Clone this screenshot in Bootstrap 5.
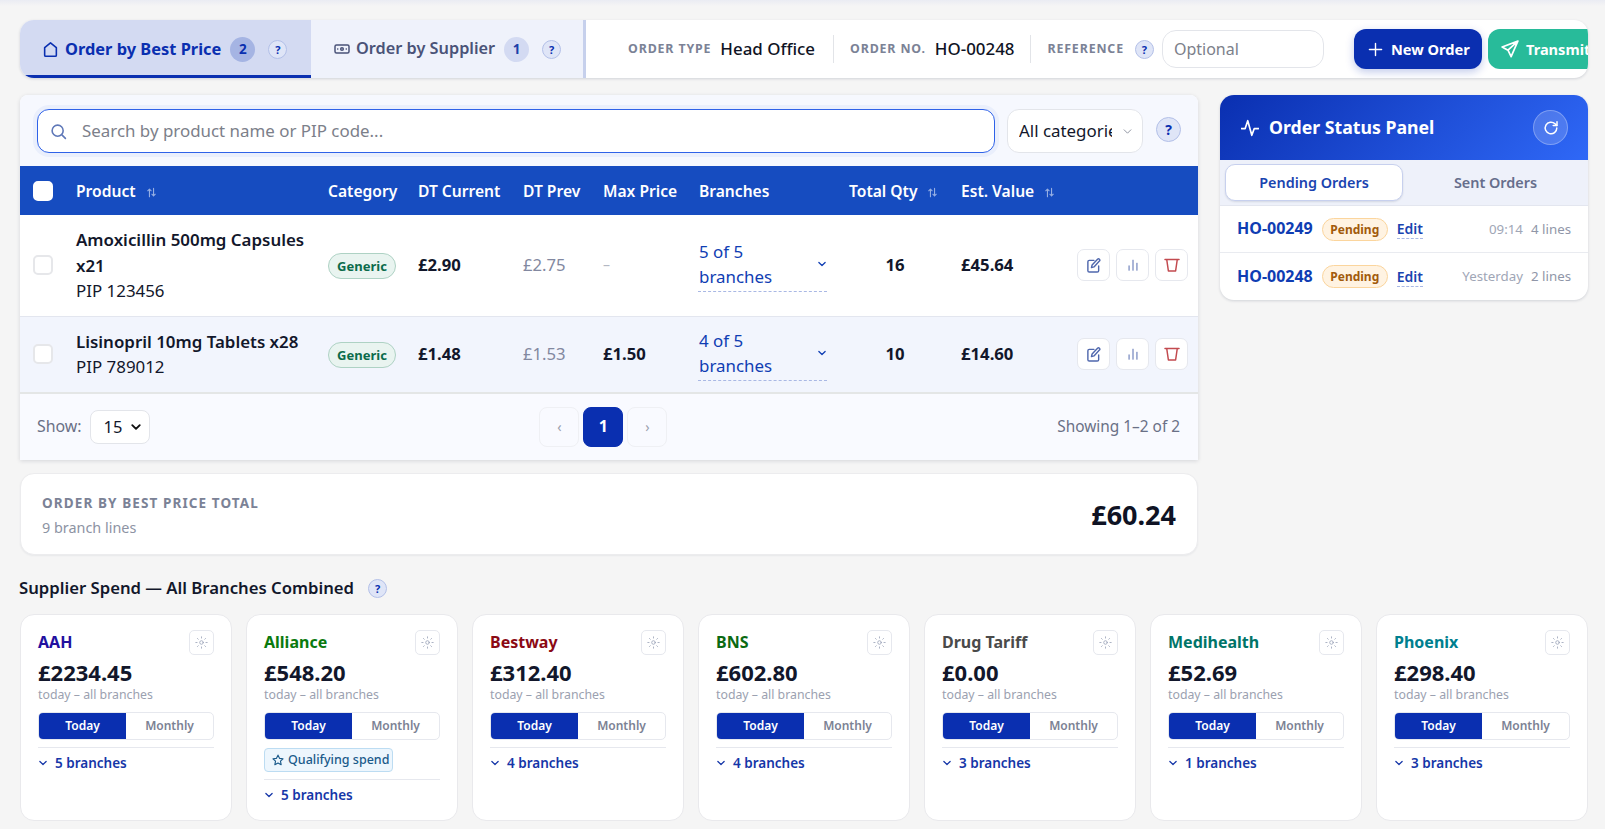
<!DOCTYPE html>
<html lang="en">
<head>
  <meta charset="UTF-8">
  <meta name="viewport" content="width=device-width, initial-scale=1.0">
  <title>Order by Best Price</title>
  <link href="https://cdn.jsdelivr.net/npm/bootstrap@5.3.3/dist/css/bootstrap.min.css" rel="stylesheet">
  <script src="https://cdn.jsdelivr.net/npm/bootstrap@5.3.3/dist/js/bootstrap.bundle.min.js"></script>
  <style>
    html, body { overflow: hidden; }
    body { background: #f5f5f5; font-family: "Noto Sans", sans-serif; color: #12172b; font-size: 15px; line-height: 1.7; height: 829px; }
    .ico { display: inline-block; fill: none; stroke: currentColor; stroke-width: 1.5; stroke-linecap: round; stroke-linejoin: round; flex-shrink: 0; }
    .top-edge { height: 6px; background: linear-gradient(#eaecf3, #f5f5f5); }
    .page-wrap { padding: 14px 17px 0 20px; }

    /* top bar */
    .top-bar { height: 58px; background: #fff; border-radius: 14px; box-shadow: 0 1px 3px rgba(20, 30, 60, .16); overflow: hidden; }
    .mode-tab { height: 58px; display: flex; align-items: center; font-size: 16.3px; font-weight: 600; color: #4a5378; background: #eff2fb; flex-shrink: 0; }
    .mode-tab.on { width: 291px; background: #d3daf2; color: #0a2fb0; font-size: 16.4px; font-weight: 700; border-bottom: 3px solid #0a2fb0; padding: 3px 0 0 22px; }
    .mode-tab.off { width: 275px; border-right: 3px solid #c6d0ec; padding-left: 23px; }
    .tab-icon { margin-right: 6px; }
    .tab-count { width: 25px; height: 25px; border-radius: 50%; display: flex; align-items: center; justify-content: center; font-size: 13.5px; font-weight: 700; margin: 0 13px 0 9px; }
    .on .tab-count { background: #a5b4e3; color: #0a2fb0; }
    .off .tab-count { background: #d3daf2; color: #1c3fa8; }
    .q-dot { width: 19px; height: 19px; border-radius: 50%; background: #dfe5f7; border: 1px solid #b3c0e8; color: #0a2fb0; font-size: 11px; font-weight: 700; display: inline-flex; align-items: center; justify-content: center; flex-shrink: 0; line-height: 1; }
    .meta-group { padding-left: 42px; }
    .meta-label { font-size: 12.4px; font-weight: 700; letter-spacing: .85px; color: #7b8296; white-space: nowrap; }
    .meta-val { font-size: 16.9px; font-weight: 500; color: #0f1324; margin-left: 9px; white-space: nowrap; }
    .meta-sep { width: 1px; height: 28px; background: #e2e4e8; margin: 0 16px; }
    .meta-sep.wide { margin-left: 18px; }
    .ref-label { margin-right: 11px; }
    .ref-input { width: 162px; height: 38px; border: 1px solid #e3e5ea; border-radius: 14px; margin-left: 8px; font-size: 16px; padding: 0 11px; color: #333; }
    .ref-input::placeholder, .find-box input::placeholder { color: #7c808a; opacity: 1; }
    .act-btn { height: 40px; border: 0; border-radius: 12px; color: #fff; font-size: 14.6px; font-weight: 700; display: flex; align-items: center; flex-shrink: 0; white-space: nowrap; }
    .act-new { width: 128px; margin-left: 30px; background: #0a2fb0; padding: 0 0 0 14px; gap: 8px; box-shadow: 0 3px 8px rgba(10, 47, 176, .25); }
    .act-send { width: 140px; margin-left: 6px; background: #28bb9a; padding: 0 0 0 13px; gap: 7px; }

    /* main table card */
    .main-row { margin-top: 17px; gap: 22px; }
    .left-col { width: 1178px; flex-shrink: 0; }
    .right-col { width: 368px; flex-shrink: 0; }
    .grid-card { background: #fff; box-shadow: 0 1px 4px rgba(20, 30, 60, .14); border-radius: 8px 8px 0 0; overflow: hidden; }
    .grid-tools { height: 71px; background: #f6f8fe; padding: 14px 17px 0; }
    .find-box { width: 958px; height: 44px; background: #fff; border: 1px solid #2f62e8; border-radius: 12px; box-shadow: 0 0 0 4px #eaeffc; padding-left: 12px; color: #5f78b8; }
    .find-box input { border: 0; outline: 0; flex-grow: 1; font-size: 16.9px; margin-left: 13px; background: transparent; }
    .cat-select { width: 136px; height: 44px; margin-left: 12px; border: 1px solid #e3e5ea; border-radius: 12px; font-size: 16.9px; padding: 0 30px 0 11px; color: #12172b; box-shadow: none; background-size: 11px 9px; background-position: right 9px center; background-image: url("data:image/svg+xml,%3csvg xmlns='http://www.w3.org/2000/svg' viewBox='0 0 16 16'%3e%3cpath fill='none' stroke='%23868b98' stroke-linecap='round' stroke-linejoin='round' stroke-width='1.6' d='m2 5 6 6 6-6'/%3e%3c/svg%3e"); }
    .q-big { width: 25px; height: 25px; font-size: 14px; margin-left: 13px; }
    .order-table { width: 1178px; table-layout: fixed; margin: 0; border-collapse: collapse; }
    .order-table th { height: 49px; background: #164cc0; color: #fff; font-size: 15.6px; font-weight: 600; padding: 1px 0 0 12px; vertical-align: middle; border: 0; white-space: nowrap; }
    .order-table td { padding: 0 0 0 12px; vertical-align: middle; border: 0; font-size: 16.9px; background: transparent; color: #12172b; box-shadow: none; }
    .order-table .first { padding-left: 13px; }
    .w-chk { width: 44px; } .w-prod { width: 252px; } .w-cat { width: 90px; } .w-cur { width: 105px; } .w-prev { width: 80px; }
    .w-max { width: 96px; } .w-branch { width: 150px; } .w-qty { width: 112px; } .w-val { width: 112px; } .w-act { width: 137px; }
    .row-a { height: 101px; border-bottom: 1px solid #e3e6ef; }
    .row-b { height: 77px; background: #f2f5fd; border-bottom: 2px solid #e4e6e6; }
    .tick { width: 20px; height: 20px; border: 2px solid #e6e7ea; border-radius: 5px; background: #fff; display: block; }
    th .tick { border-color: #fff; }
    .prod-name { font-weight: 600; line-height: 25.5px; }
    .prod-pip { line-height: 25.5px; }
    .kind-pill { display: inline-block; width: 68px; height: 26px; line-height: 24px; text-align: center; border-radius: 13px; background: #e9f4f0; border: 1px solid #aed2c4; color: #0b6b4b; font-size: 13px; font-weight: 700; }
    .order-table td.strong-price { font-weight: 700; font-size: 16.7px; }
    .order-table td.soft-price { color: #8288a0; font-size: 16.7px; }
    .order-table td.no-price { color: #b4b8c4; font-size: 14px; }
    .branch-pick { width: 129px; margin-left: -1px; border-bottom: 1px dashed #a9b8e4; color: #0f3db3; line-height: 25px; padding: 0 0 2px 1px; }
    .branch-pick span { width: 80px; }
    .branch-pick .ico { stroke-width: 2; }
    .act-row { padding-left: 4px; gap: 6px; }
    .act-cell { width: 33px; height: 32px; border: 1px solid #e6e8ee; border-radius: 7px; background: #fff; display: flex; align-items: center; justify-content: center; color: #4f67ad; }
    .act-cell.danger { color: #c24a4f; }
    .act-cell .thin { stroke-width: 1.1; }
    .sort-ico { color: rgba(255, 255, 255, .55); margin-left: 10px; vertical-align: -1px; stroke-width: 1.6; }
    .grid-foot { height: 66px; background: #f9faff; padding: 0 18px 0 17px; color: #6a7086; font-size: 15.9px; }
    .foot-count { font-size: 15.4px; }
    .show-select { width: 60px; height: 34px; margin-left: 8px; border: 1px solid #e3e5ea; border-radius: 8px; font-size: 16.5px; padding: 0 0 0 13px; color: #12172b; box-shadow: none; background-size: 12px 10px; background-position: right 7px center; background-image: url("data:image/svg+xml,%3csvg xmlns='http://www.w3.org/2000/svg' viewBox='0 0 16 16'%3e%3cpath fill='none' stroke='%23111' stroke-linecap='round' stroke-linejoin='round' stroke-width='3' d='m2 5 6 6 6-6'/%3e%3c/svg%3e"); }
    .pager-cell { width: 40px; height: 40px; border: 1px solid #eff0f4; border-radius: 8px; display: flex; align-items: center; justify-content: center; color: #9aa0ae; font-size: 14px; }
    .pager-cell.cur { background: #0a2fb0; border-color: #0a2fb0; color: #fff; font-weight: 700; font-size: 16px; }

    /* total */
    .total-card { height: 82px; margin-top: 13px; background: #fff; border: 1px solid #ececee; border-radius: 14px; padding: 2px 21px 0; box-shadow: 0 1px 2px rgba(20, 30, 60, .06); }
    .total-label { font-size: 13.5px; font-weight: 700; letter-spacing: 1.1px; color: #7b8296; line-height: 24px; }
    .total-lines { font-size: 14.4px; color: #8d93a3; line-height: 24px; margin-top: 1px; }
    .total-amount { font-size: 27px; font-weight: 700; color: #0f1324; }

    /* status panel */
    .status-card { background: #fff; border-radius: 14px; overflow: hidden; box-shadow: 0 1px 3px rgba(20, 30, 60, .16); }
    .status-head { height: 65px; background: linear-gradient(135deg, #0a2fb0, #2f68f7); color: #fff; padding: 0 20px 0 21px; }
    .status-title { font-size: 17.7px; font-weight: 700; margin-left: 10px; }
    .refresh-btn { width: 35px; height: 35px; border-radius: 50%; background: rgba(255, 255, 255, .17); border: 1px solid rgba(255, 255, 255, .28); display: flex; align-items: center; justify-content: center; }
    .status-tabs { height: 46px; background: #eef1fa; padding: 4px 0 0 5px; border-bottom: 1px solid #e3e6ef; font-size: 14.4px; font-weight: 600; color: #666e8c; }
    .status-tab { height: 37px; display: flex; align-items: center; justify-content: center; flex: 0 0 178px; padding-top: 2px; }
    .status-tab.on { background: #fff; border: 1px solid #c7d0ee; border-radius: 10px; color: #1a44b0; box-shadow: 0 1px 2px rgba(20, 30, 60, .12); }
    .status-tab.rest { flex: 1 0 0; }
    .status-row { height: 47px; padding: 0 17px 0 18px; border-bottom: 1px solid #e9ebf0; }
    .status-row:last-child { border-bottom: 0; }
    .order-no { font-size: 16px; font-weight: 700; color: #0f3db3; margin-left: -1px; }
    .pend-pill { width: 66px; height: 23px; line-height: 21px; text-align: center; margin-left: 9px; border-radius: 12px; background: #fff3e2; border: 1px solid #fbd59d; color: #a25b0c; font-size: 12px; font-weight: 700; }
    .edit-link { margin-left: 9px; font-size: 14px; font-weight: 600; line-height: 19px; color: #1a44b0; border-bottom: 1px dashed #a9b8e4; }
    .row-when { margin-left: auto; color: #a0a6b6; font-size: 13.3px; }
    .row-lines { margin-left: 8px; color: #9096a8; font-size: 13.3px; }

    /* supplier spend */
    .spend-head { margin: 21px 0 0 -1px; height: 24px; font-size: 16.7px; font-weight: 600; color: #12172b; }
    .spend-head .q-dot { margin-left: 14px; }
    .spend-grid { margin-top: 14px; gap: 14px; }
    .spend-card { width: 212px; height: 207px; flex-shrink: 0; background: #fff; border: 1px solid #e9e9ec; border-radius: 14px; padding: 15px 17px 0; }
    .sup-name { font-size: 16px; font-weight: 700; line-height: 25px; }
    .gear-btn { width: 25px; height: 25px; border: 1px solid #e6e8ee; border-radius: 5px; display: flex; align-items: center; justify-content: center; color: #9aa2b8; }
    .gear-btn .ico { stroke-width: 1; }
    .spend-amt { font-size: 22px; font-weight: 700; line-height: 29px; margin-top: 3px; color: #12172b; }
    .spend-sub { font-size: 12.3px; line-height: 16px; color: #9ba1b0; }
    .spend-toggle { height: 28px; margin-top: 9px; border: 1px solid #e6e8ee; border-radius: 5px; overflow: hidden; font-size: 12px; font-weight: 600; }
    .spend-toggle div { flex: 1 0 0; text-align: center; line-height: 26px; color: #7c8294; }
    .spend-toggle .on { background: #0a2fb0; color: #fff; }
    .spend-branches { margin-top: 7px; border-top: 1px solid #e6e8ee; padding-top: 2px; font-size: 13.5px; font-weight: 600; color: #1536a8; line-height: 26px; gap: 7px; display: flex; align-items: center; }
    .spend-branches .ico { stroke-width: 2; }
    .qual-tag { width: 129px; height: 24px; margin-top: 8px; background: #edf6fd; border: 1px solid #bcdcf2; border-radius: 4px; color: #1a5a8a; font-size: 12.5px; font-weight: 500; gap: 4px; padding-left: 7px; }
    .c-aah { color: #22109f; } .c-all { color: #0a7a0e; } .c-bes { color: #8b0a14; } .c-bns { color: #0b6a12; }
    .c-dt { color: #4a4a4a; } .c-med { color: #007468; } .c-pho { color: #007f8f; }
  </style>
</head>
<body>
  <svg width="0" height="0" class="position-absolute">
    <symbol id="i-house" viewBox="0 0 16 16"><path d="M2.5 6.3 8 1.8l5.5 4.5v7a1 1 0 0 1-1 1h-9a1 1 0 0 1-1-1z"/></symbol>
    <symbol id="i-cash" viewBox="0 0 16 16"><rect x="1" y="4" width="14" height="8" rx="1.5"/><circle cx="8" cy="8" r="1.3"/><path d="M3.6 8h.2M12.2 8h.2"/></symbol>
    <symbol id="i-search" viewBox="0 0 16 16"><circle cx="7.2" cy="7.2" r="5.2"/><path d="m11.2 11.2 3.3 3.3"/></symbol>
    <symbol id="i-plus" viewBox="0 0 16 16"><path d="M8 1.5v13M1.5 8h13"/></symbol>
    <symbol id="i-send" viewBox="0 0 16 16"><path d="M15 1 1 6.2l5.2 2.900L9 14.800zM15 1 6.200 9.100"/></symbol>
    <symbol id="i-pulse" viewBox="0 0 16 16"><path d="M.5 8.500h3.200L6 1.500l3.600 13 2.200-6h3.700"/></symbol>
    <symbol id="i-redo" viewBox="0 0 16 16"><path d="M13.800 8A5.800 5.800 0 1 1 12 3.800l1.800 1.700"/><path d="M14 1.800v3.800h-3.800"/></symbol>
    <symbol id="i-edit" viewBox="0 0 16 16"><path d="M8.500 2.500h-5A1.500 1.500 0 0 0 2 4v9.500A1.500 1.500 0 0 0 3.500 15H12a1.500 1.500 0 0 0 1.500-1.500v-5"/><path d="M12.300 1.300a1.300 1.300 0 0 1 2 2L8.500 9.500l-2.700.7.700-2.700z"/></symbol>
    <symbol id="i-bars" viewBox="0 0 16 16"><path d="M3.500 9v5M8 2.500V14M12.500 6v8"/></symbol>
    <symbol id="i-bin" viewBox="0 0 16 16"><path d="M1 2.500h14M2.800 3l1.600 11h7.200L13.200 3"/></symbol>
    <symbol id="i-gear" viewBox="0 0 16 16"><circle cx="8" cy="8" r="2.200"/><path d="M8 1v1.500M8 13.500V15M1 8h1.500M13.500 8H15M3 3l1 1M12 12l1 1M13 3l-1 1M4 12l-1 1" stroke-dasharray="1.500 1"/></symbol>
    <symbol id="i-star" viewBox="0 0 16 16"><path d="m8 1.500 2 4.300 4.700.6-3.400 3.200.9 4.700L8 12l-4.200 2.300.9-4.700-3.400-3.200L6 5.800z"/></symbol>
    <symbol id="i-down" viewBox="0 0 16 16"><path d="m3 5.500 5 5 5-5"/></symbol>
    <symbol id="i-sort" viewBox="0 0 16 16"><path d="M5 14V3M2.500 5.500 5 3l2.500 2.500M11 2v11M8.500 10.500 11 13l2.500-2.500"/></symbol>
  </svg>

  <div class="top-edge"></div>
  <div class="page-wrap">
    <div class="top-bar d-flex align-items-center">
      <div class="mode-tab on">
        <svg class="ico tab-icon" width="17" height="17"><use href="#i-house"/></svg>Order by Best Price
        <span class="tab-count">2</span><span class="q-dot">?</span>
      </div>
      <div class="mode-tab off">
        <svg class="ico tab-icon" width="16" height="16"><use href="#i-cash"/></svg>Order by Supplier
        <span class="tab-count">1</span><span class="q-dot">?</span>
      </div>
      <div class="meta-group d-flex align-items-center flex-shrink-0">
        <span class="meta-label">ORDER TYPE</span><span class="meta-val">Head Office</span>
        <span class="meta-sep wide"></span>
        <span class="meta-label">ORDER NO.</span><span class="meta-val">HO-00248</span>
        <span class="meta-sep"></span>
        <span class="meta-label ref-label">REFERENCE</span><span class="q-dot">?</span>
        <input class="ref-input" type="text" placeholder="Optional">
        <button class="act-btn act-new" type="button"><svg class="ico" width="15" height="15"><use href="#i-plus"/></svg>New Order</button>
        <button class="act-btn act-send" type="button"><svg class="ico" width="18" height="18"><use href="#i-send"/></svg>Transmit</button>
      </div>
    </div>

    <div class="main-row d-flex align-items-start">
      <div class="left-col">
        <div class="grid-card">
          <div class="grid-tools d-flex align-items-start">
            <div class="find-box d-flex align-items-center">
              <svg class="ico" width="17" height="17"><use href="#i-search"/></svg>
              <input type="text" placeholder="Search by product name or PIP code...">
            </div>
            <select class="form-select cat-select"><option>All categories</option></select>
            <span class="q-dot q-big mt-2">?</span>
          </div>
          <table class="table order-table">
            <colgroup>
              <col class="w-chk"><col class="w-prod"><col class="w-cat"><col class="w-cur"><col class="w-prev">
              <col class="w-max"><col class="w-branch"><col class="w-qty"><col class="w-val"><col class="w-act">
            </colgroup>
            <thead>
              <tr>
                <th class="first"><span class="tick"></span></th>
                <th>Product<svg class="ico sort-ico" width="11" height="11"><use href="#i-sort"/></svg></th>
                <th>Category</th>
                <th>DT Current</th>
                <th>DT Prev</th>
                <th>Max Price</th>
                <th>Branches</th>
                <th>Total Qty<svg class="ico sort-ico" width="11" height="11"><use href="#i-sort"/></svg></th>
                <th>Est. Value<svg class="ico sort-ico" width="11" height="11"><use href="#i-sort"/></svg></th>
                <th></th>
              </tr>
            </thead>
            <tbody>
              <tr class="row-a">
                <td class="first"><span class="tick"></span></td>
                <td><div class="prod-name">Amoxicillin 500mg Capsules x21</div><div class="prod-pip">PIP 123456</div></td>
                <td><span class="kind-pill">Generic</span></td>
                <td class="strong-price">£2.90</td>
                <td class="soft-price">£2.75</td>
                <td class="no-price">–</td>
                <td><div class="branch-pick d-flex align-items-center justify-content-between"><span>5 of 5 branches</span><svg class="ico" width="10" height="10"><use href="#i-down"/></svg></div></td>
                <td class="text-center strong-price pe-2">16</td>
                <td class="strong-price">£45.64</td>
                <td><div class="act-row d-flex"><div class="act-cell"><svg class="ico" width="15" height="15"><use href="#i-edit"/></svg></div><div class="act-cell"><svg class="ico thin" width="14" height="14"><use href="#i-bars"/></svg></div><div class="act-cell danger"><svg class="ico" width="16" height="16"><use href="#i-bin"/></svg></div></div></td>
              </tr>
              <tr class="row-b">
                <td class="first"><span class="tick"></span></td>
                <td><div class="prod-name">Lisinopril 10mg Tablets x28</div><div class="prod-pip">PIP 789012</div></td>
                <td><span class="kind-pill">Generic</span></td>
                <td class="strong-price">£1.48</td>
                <td class="soft-price">£1.53</td>
                <td class="strong-price">£1.50</td>
                <td><div class="branch-pick d-flex align-items-center justify-content-between"><span>4 of 5 branches</span><svg class="ico" width="10" height="10"><use href="#i-down"/></svg></div></td>
                <td class="text-center strong-price pe-2">10</td>
                <td class="strong-price">£14.60</td>
                <td><div class="act-row d-flex"><div class="act-cell"><svg class="ico" width="15" height="15"><use href="#i-edit"/></svg></div><div class="act-cell"><svg class="ico thin" width="14" height="14"><use href="#i-bars"/></svg></div><div class="act-cell danger"><svg class="ico" width="16" height="16"><use href="#i-bin"/></svg></div></div></td>
              </tr>
            </tbody>
          </table>
          <div class="grid-foot d-flex align-items-center justify-content-between">
            <div class="d-flex align-items-center">Show:<select class="form-select show-select"><option>15</option></select></div>
            <div class="d-flex gap-1">
              <div class="pager-cell">‹</div><div class="pager-cell cur">1</div><div class="pager-cell">›</div>
            </div>
            <div class="foot-count">Showing 1–2 of 2</div>
          </div>
        </div>
        <div class="total-card d-flex align-items-center justify-content-between">
          <div><div class="total-label">ORDER BY BEST PRICE TOTAL</div><div class="total-lines">9 branch lines</div></div>
          <div class="total-amount">£60.24</div>
        </div>
      </div>

      <div class="right-col">
        <div class="status-card">
          <div class="status-head d-flex align-items-center">
            <svg class="ico" width="18" height="18"><use href="#i-pulse"/></svg>
            <span class="status-title">Order Status Panel</span>
            <span class="refresh-btn ms-auto"><svg class="ico" width="16" height="16"><use href="#i-redo"/></svg></span>
          </div>
          <div class="status-tabs d-flex">
            <div class="status-tab on">Pending Orders</div>
            <div class="status-tab rest">Sent Orders</div>
          </div>
          <div class="status-row d-flex align-items-center">
            <span class="order-no">HO-00249</span><span class="pend-pill">Pending</span><span class="edit-link">Edit</span>
            <span class="row-when">09:14</span><span class="row-lines">4 lines</span>
          </div>
          <div class="status-row d-flex align-items-center">
            <span class="order-no">HO-00248</span><span class="pend-pill">Pending</span><span class="edit-link">Edit</span>
            <span class="row-when">Yesterday</span><span class="row-lines">2 lines</span>
          </div>
        </div>
      </div>
    </div>

    <div class="spend-head d-flex align-items-center">Supplier Spend — All Branches Combined<span class="q-dot">?</span></div>
    <div class="spend-grid d-flex">
      <div class="spend-card">
        <div class="d-flex justify-content-between"><span class="sup-name c-aah">AAH</span><span class="gear-btn"><svg class="ico" width="13" height="13"><use href="#i-gear"/></svg></span></div>
        <div class="spend-amt">£2234.45</div><div class="spend-sub">today – all branches</div>
        <div class="spend-toggle d-flex"><div class="on">Today</div><div>Monthly</div></div>
        <div class="spend-branches"><svg class="ico" width="10" height="10"><use href="#i-down"/></svg>5 branches</div>
      </div>
      <div class="spend-card">
        <div class="d-flex justify-content-between"><span class="sup-name c-all">Alliance</span><span class="gear-btn"><svg class="ico" width="13" height="13"><use href="#i-gear"/></svg></span></div>
        <div class="spend-amt">£548.20</div><div class="spend-sub">today – all branches</div>
        <div class="spend-toggle d-flex"><div class="on">Today</div><div>Monthly</div></div>
        <div class="qual-tag d-flex align-items-center"><svg class="ico" width="12" height="12"><use href="#i-star"/></svg>Qualifying spend</div>
        <div class="spend-branches"><svg class="ico" width="10" height="10"><use href="#i-down"/></svg>5 branches</div>
      </div>
      <div class="spend-card">
        <div class="d-flex justify-content-between"><span class="sup-name c-bes">Bestway</span><span class="gear-btn"><svg class="ico" width="13" height="13"><use href="#i-gear"/></svg></span></div>
        <div class="spend-amt">£312.40</div><div class="spend-sub">today – all branches</div>
        <div class="spend-toggle d-flex"><div class="on">Today</div><div>Monthly</div></div>
        <div class="spend-branches"><svg class="ico" width="10" height="10"><use href="#i-down"/></svg>4 branches</div>
      </div>
      <div class="spend-card">
        <div class="d-flex justify-content-between"><span class="sup-name c-bns">BNS</span><span class="gear-btn"><svg class="ico" width="13" height="13"><use href="#i-gear"/></svg></span></div>
        <div class="spend-amt">£602.80</div><div class="spend-sub">today – all branches</div>
        <div class="spend-toggle d-flex"><div class="on">Today</div><div>Monthly</div></div>
        <div class="spend-branches"><svg class="ico" width="10" height="10"><use href="#i-down"/></svg>4 branches</div>
      </div>
      <div class="spend-card">
        <div class="d-flex justify-content-between"><span class="sup-name c-dt">Drug Tariff</span><span class="gear-btn"><svg class="ico" width="13" height="13"><use href="#i-gear"/></svg></span></div>
        <div class="spend-amt">£0.00</div><div class="spend-sub">today – all branches</div>
        <div class="spend-toggle d-flex"><div class="on">Today</div><div>Monthly</div></div>
        <div class="spend-branches"><svg class="ico" width="10" height="10"><use href="#i-down"/></svg>3 branches</div>
      </div>
      <div class="spend-card">
        <div class="d-flex justify-content-between"><span class="sup-name c-med">Medihealth</span><span class="gear-btn"><svg class="ico" width="13" height="13"><use href="#i-gear"/></svg></span></div>
        <div class="spend-amt">£52.69</div><div class="spend-sub">today – all branches</div>
        <div class="spend-toggle d-flex"><div class="on">Today</div><div>Monthly</div></div>
        <div class="spend-branches"><svg class="ico" width="10" height="10"><use href="#i-down"/></svg>1 branches</div>
      </div>
      <div class="spend-card">
        <div class="d-flex justify-content-between"><span class="sup-name c-pho">Phoenix</span><span class="gear-btn"><svg class="ico" width="13" height="13"><use href="#i-gear"/></svg></span></div>
        <div class="spend-amt">£298.40</div><div class="spend-sub">today – all branches</div>
        <div class="spend-toggle d-flex"><div class="on">Today</div><div>Monthly</div></div>
        <div class="spend-branches"><svg class="ico" width="10" height="10"><use href="#i-down"/></svg>3 branches</div>
      </div>
    </div>
  </div>
</body>
</html>
